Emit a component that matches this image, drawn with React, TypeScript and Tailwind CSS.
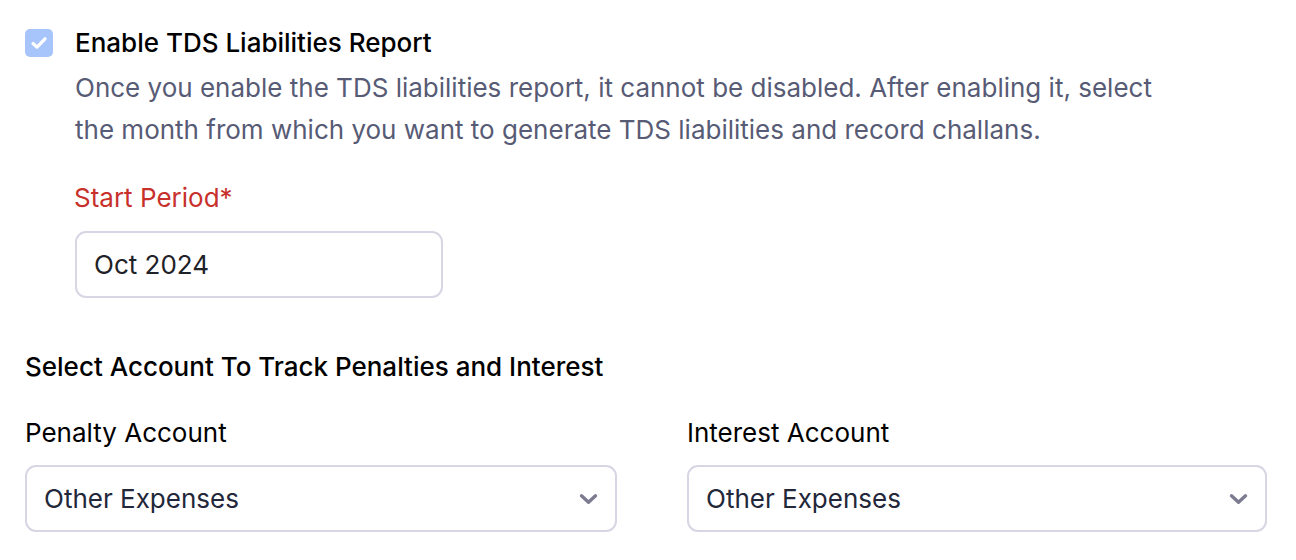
import { useState } from "react";

const Chevron = () => (
  <svg width="19" height="12" viewBox="0 0 19 12" fill="none" className="shrink-0">
    <path
      d="M2.5 2.8L9.5 9.2L16.5 2.8"
      stroke="#7c7b8f"
      strokeWidth="3.4"
      strokeLinecap="round"
      strokeLinejoin="round"
    />
  </svg>
);

const SelectBox = ({ value, className }: { value: string; className: string }) => (
  <div
    className={`flex h-[67px] items-center justify-between rounded-[11px] border-2 border-[#d7d6e4] bg-white pl-[17px] pr-[17px] ${className}`}
  >
    <span className="text-[26px] text-[#22273a]">{value}</span>
    <Chevron />
  </div>
);

export default function App() {
  const [enabled, setEnabled] = useState(true);

  return (
    <div
      className="min-h-[560px] w-full bg-white pl-[25px] pt-[29px]"
      style={{ fontFamily: "Inter, 'Noto Sans', sans-serif" }}
    >
      <div className="flex items-start gap-[22px]">
        <button
          className="flex h-[28px] w-[28px] shrink-0 items-center justify-center rounded-[5px] bg-[#a8c5fb]"
          onClick={() => setEnabled(!enabled)}
        >
          {enabled && (
            <svg className="h-[20px] w-[20px]" viewBox="0 0 20 20" fill="none">
              <path
                d="M4 10.5L8 14.2L16 5.8"
                stroke="#ffffff"
                strokeWidth="3.2"
                strokeLinecap="round"
                strokeLinejoin="round"
              />
            </svg>
          )}
        </button>

        <div className="flex flex-col">
          <div className="text-[26px] font-medium leading-[28px] text-black">
            Enable TDS Liabilities Report
          </div>
          <p className="mt-[10px] text-[26px] leading-[42px] text-[#575b75]">
            Once you enable the TDS liabilities report, it cannot be disabled. After enabling it, select
            <br />
            the month from which you want to generate TDS liabilities and record challans.
          </p>

          <label className="-ml-[1px] mt-[31px] text-[26px] leading-[32px] text-[#c8302b]">Start Period*</label>
          <div className="mt-[17px] flex h-[67px] w-[368px] items-center rounded-[11px] border-2 border-[#d7d6e4] pl-[17px]">
            <span className="text-[26px] text-[#1f2228]">Oct 2024</span>
          </div>
        </div>
      </div>

      <div className="mt-[53px] text-[26px] font-medium leading-[32px] text-black">
        Select Account To Track Penalties and Interest
      </div>

      <div className="mt-[34px] flex gap-[70px]">
        <div className="flex flex-col">
          <label className="text-[26px] leading-[32px] text-black">Penalty Account</label>
          <SelectBox value="Other Expenses" className="mt-[16px] w-[592px]" />
        </div>
        <div className="flex flex-col">
          <label className="text-[26px] leading-[32px] text-black">Interest Account</label>
          <SelectBox value="Other Expenses" className="mt-[16px] w-[580px]" />
        </div>
      </div>
    </div>
  );
}
